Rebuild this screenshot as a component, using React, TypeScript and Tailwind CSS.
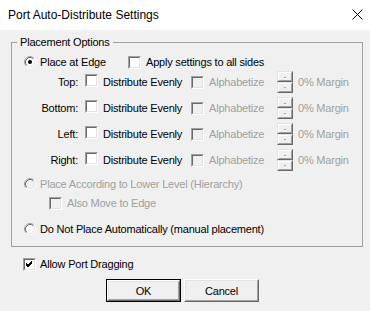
import React from "react";

function Checkbox({ checked = false, disabled = false }: { checked?: boolean; disabled?: boolean }) {
  return (
    <span className="inline-flex w-[13px] h-[13px] shrink-0 border-t border-l border-t-[#a0a0a0] border-l-[#a0a0a0] border-r border-b border-r-white border-b-white">
      <span
        className={`flex items-center justify-center w-full h-full border-t border-l border-t-[#696969] border-l-[#696969] border-r border-b border-r-[#e3e3e3] border-b-[#e3e3e3] ${
          disabled ? "bg-[#f0f0f0]" : "bg-white"
        }`}>
        {checked && (
          <svg width="9" height="9" viewBox="0 0 9 9">
            <path d="M1 4 L3 6 L7 2 M1 5 L3 7 L7 3 M1 3 L3 5 L7 1" stroke="#000" strokeWidth="1" fill="none" />
          </svg>
        )}
      </span>
    </span>
  );
}

function Radio({ checked = false, disabled = false }: { checked?: boolean; disabled?: boolean }) {
  return (
    <svg width="12" height="12" viewBox="0 0 12 12" className="shrink-0">
      <circle cx="6" cy="6" r="4.5" fill={disabled ? "#f0f0f0" : "#fff"} />
      <path d="M2.11 9.89 A5.5 5.5 0 0 1 9.89 2.11" stroke="#a0a0a0" fill="none" />
      <path d="M9.89 2.11 A5.5 5.5 0 0 1 2.11 9.89" stroke="#fff" fill="none" />
      <path d="M2.82 9.18 A4.5 4.5 0 0 1 9.18 2.82" stroke="#696969" fill="none" />
      <path d="M9.18 2.82 A4.5 4.5 0 0 1 2.82 9.18" stroke="#e3e3e3" fill="none" />
      {checked && <circle cx="6" cy="6" r="2" fill="#000" />}
    </svg>
  );
}

function SpinHalf({ up }: { up?: boolean }) {
  return (
    <span className="flex w-[16px] h-[11px] border-t border-l border-t-[#e3e3e3] border-l-[#e3e3e3] border-r border-b border-r-[#696969] border-b-[#696969]">
      <span className="flex items-center justify-center w-full h-full bg-[#f0f0f0] border-t border-l border-t-white border-l-white border-r border-b border-r-[#a0a0a0] border-b-[#a0a0a0]">
        <svg width="6" height="4" viewBox="0 0 6 4">
          {up ? (
            <>
              <path d="M2 3 L3 2 L4 3 Z" fill="#fff" stroke="#fff" strokeWidth="0.5" transform="translate(0.5 0.5)" />
              <path d="M1.5 3 L3 1.5 L4.5 3 Z" fill="#a0a0a0" />
            </>
          ) : (
            <>
              <path d="M2 1 L3 2 L4 1 Z" fill="#fff" stroke="#fff" strokeWidth="0.5" transform="translate(0.5 0.5)" />
              <path d="M1.5 1 L3 2.5 L4.5 1 Z" fill="#a0a0a0" />
            </>
          )}
        </svg>
      </span>
    </span>
  );
}

function Spin() {
  return (
    <span className="flex flex-col shrink-0">
      <SpinHalf up />
      <SpinHalf />
    </span>
  );
}

function EdgeRow({ label, className = "" }: { label: string; className?: string }) {
  return (
    <div className={`flex items-center h-[18px] ${className}`}>
      <span className="w-[66px] text-right">{label}</span>
      <span className="ml-[7px]">
        <Checkbox />
      </span>
      <span className="ml-[5px] w-[88px]">Distribute Evenly</span>
      <Checkbox disabled />
      <span className="ml-[5px] w-[68px] text-[#a0a0a0]">Alphabetize</span>
      <Spin />
      <span className="ml-[5px] text-[#a0a0a0]">0% Margin</span>
    </div>
  );
}

function Button({ label, isDefault }: { label: string; isDefault?: boolean }) {
  return (
    <div className={`w-[75px] h-[23px] flex ${isDefault ? "border border-black" : ""}`}>
      <div className="flex w-full h-full border-t border-l border-t-white border-l-white border-r border-b border-r-[#696969] border-b-[#696969]">
        <div className="flex items-center justify-center w-full h-full bg-[#f0f0f0] border-t border-l border-t-[#e3e3e3] border-l-[#e3e3e3] border-r border-b border-r-[#a0a0a0] border-b-[#a0a0a0]">
          {label}
        </div>
      </div>
    </div>
  );
}

export default function App() {
  return (
    <div className="w-[370px] h-[311px] bg-[#f0f0f0] font-['Liberation_Sans',Arial,sans-serif] text-[11px] tracking-[-0.2px] leading-[18px] text-black overflow-hidden">
      {/* Title bar */}
      <div className="h-[30px] bg-white flex items-center justify-between pl-[8px] pr-[4px]">
        <span className="text-[12px] tracking-normal">Port Auto-Distribute Settings</span>
        <svg width="11" height="11" viewBox="0 0 11 11" className="mr-[3px] -mt-[1px]">
          <path d="M0.5 0.5 L10.5 10.5 M10.5 0.5 L0.5 10.5" stroke="#000" strokeWidth="1" />
        </svg>
      </div>

      {/* Placement Options group */}
      <div className="relative ml-[11px] mt-[12px] w-[352px] h-[205px] border border-[#a0a0a0] pt-[10px] pl-[12px] flex flex-col">
        <span className="absolute -top-[7px] left-[5px] px-[3px] bg-[#f0f0f0] leading-[13px]">Placement Options</span>

        <div className="flex items-center h-[18px]">
          <Radio checked />
          <span className="ml-[4px] w-[88px]">Place at Edge</span>
          <Checkbox />
          <span className="ml-[5px]">Apply settings to all sides</span>
        </div>

        <EdgeRow label="Top:" className="-ml-[12px] mt-[2px]" />
        <EdgeRow label="Bottom:" className="-ml-[12px] mt-[8px]" />
        <EdgeRow label="Left:" className="-ml-[12px] mt-[8px]" />
        <EdgeRow label="Right:" className="-ml-[12px] mt-[8px]" />

        <div className="flex items-center h-[18px] mt-[6px] text-[#a0a0a0]">
          <Radio disabled />
          <span className="ml-[4px]">Place According to Lower Level (Hierarchy)</span>
        </div>
        <div className="flex items-center h-[18px] mt-[1px] pl-[25px] text-[#a0a0a0]">
          <Checkbox disabled />
          <span className="ml-[5px]">Also Move to Edge</span>
        </div>
        <div className="flex items-center h-[18px] mt-[8px]">
          <Radio />
          <span className="ml-[4px]">Do Not Place Automatically (manual placement)</span>
        </div>
      </div>

      <div className="flex items-center h-[18px] mt-[8px] pl-[23px]">
        <Checkbox checked />
        <span className="ml-[4px]">Allow Port Dragging</span>
      </div>

      <div className="flex gap-[3px] pl-[106px] mt-[6px]">
        <Button label="OK" isDefault />
        <Button label="Cancel" />
      </div>
    </div>
  );
}
